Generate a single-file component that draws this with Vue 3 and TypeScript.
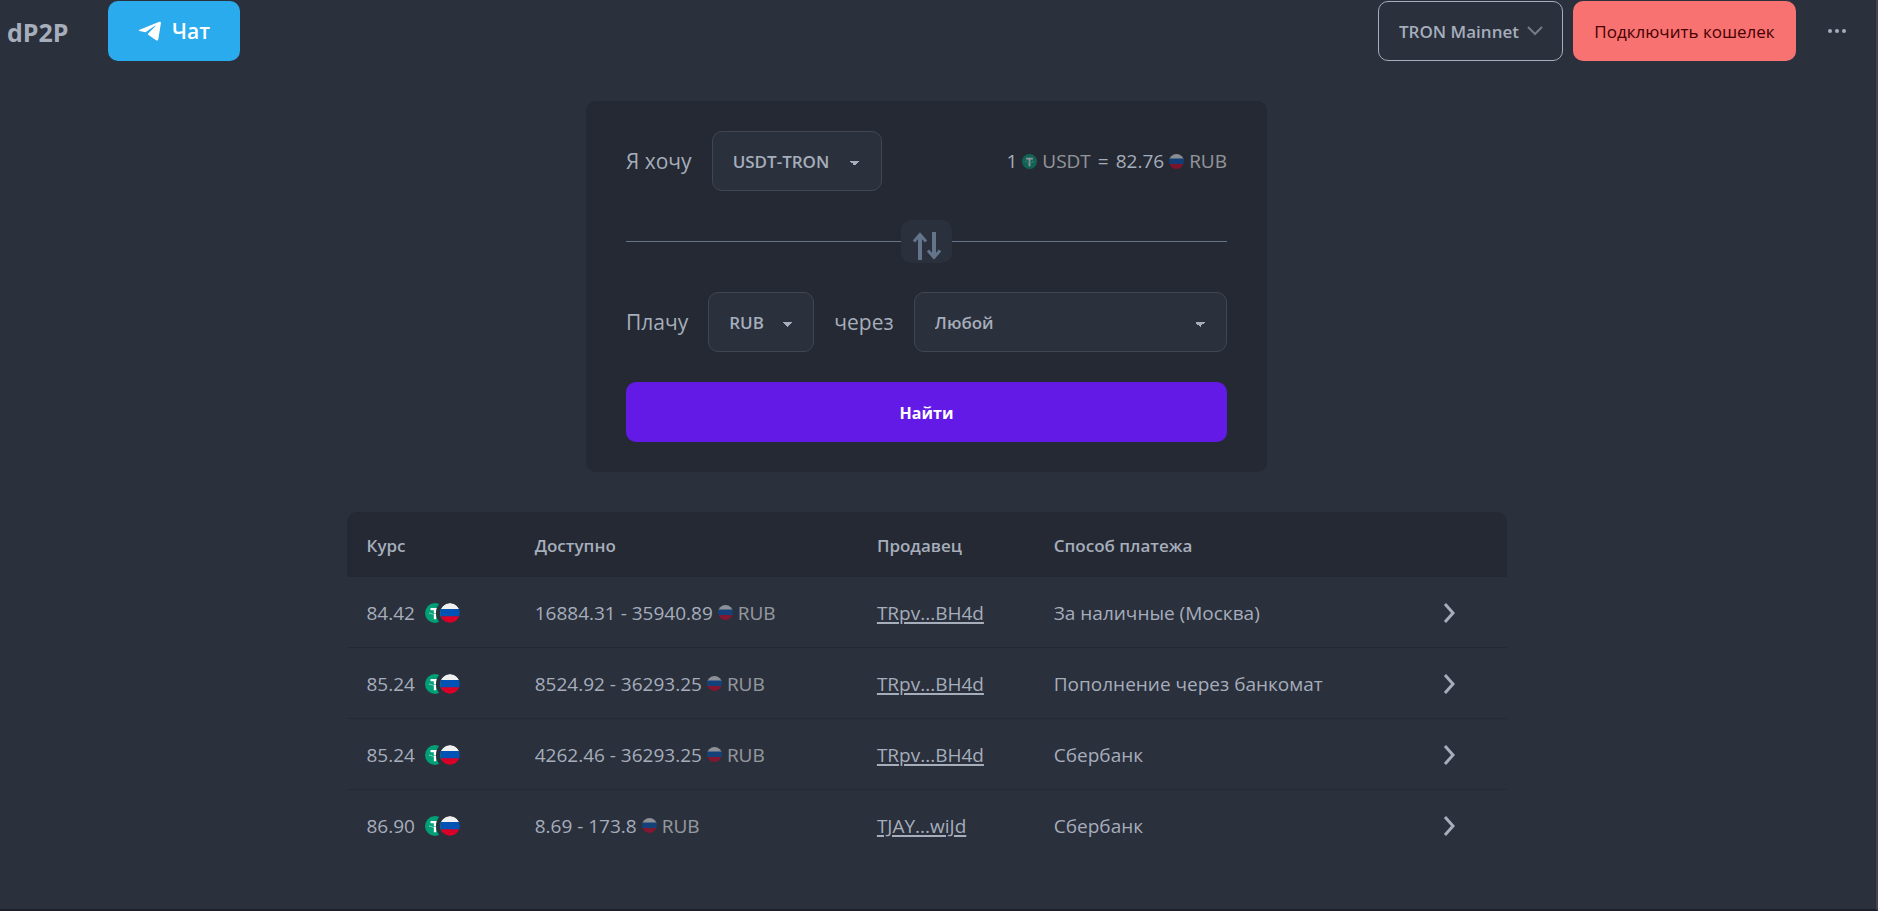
<script setup lang="ts">
import { ref } from 'vue'

interface Offer {
  rate: string
  available: string
  seller: string
  method: string
}

const network = ref('TRON Mainnet')
const asset = ref('USDT-TRON')
const fiat = ref('RUB')
const payment = ref('Любой')

const offers: Offer[] = [
  { rate: '84.42', available: '16884.31 - 35940.89', seller: 'TRpv...BH4d', method: 'За наличные (Москва)' },
  { rate: '85.24', available: '8524.92 - 36293.25', seller: 'TRpv...BH4d', method: 'Пополнение через банкомат' },
  { rate: '85.24', available: '4262.46 - 36293.25', seller: 'TRpv...BH4d', method: 'Сбербанк' },
  { rate: '86.90', available: '8.69 - 173.8', seller: 'TJAY...wiJd', method: 'Сбербанк' },
]
</script>

<template>
  <svg class="defs" aria-hidden="true">
    <symbol id="coin-usdt" viewBox="0 0 32 32">
      <circle cx="16" cy="16" r="16" fill="#009f76" />
      <path
        fill="#fff"
        d="M17.9 17.4c-.1 0-.7.1-1.9.1-1 0-1.7 0-1.9-.1-3.8-.2-6.600-.8-6.600-1.700s2.800-1.500 6.600-1.700v2.600c.3 0 1 .1 1.900.1 1.100 0 1.700 0 1.900-.1V14c3.800.2 6.600.8 6.600 1.700s-2.800 1.500-6.600 1.700m0-3.500v-2.300h5.300V8H8.800v3.600h5.300v2.300c-4.300.2-7.500 1-7.500 2.100s3.200 1.900 7.500 2.100V26h3.800v-7.900c4.300-.2 7.500-1 7.500-2.100s-3.200-1.900-7.500-2.100"
      />
    </symbol>
    <symbol id="flag-ru" viewBox="0 0 30 30">
      <clipPath id="flag-round"><circle cx="15" cy="15" r="15" /></clipPath>
      <g clip-path="url(#flag-round)">
        <path fill="#f0f0f0" d="M0 0h30v10H0z" />
        <path fill="#0052b4" d="M0 9h30v12H0z" />
        <path fill="#d80027" d="M0 20h30v10H0z" />
      </g>
    </symbol>
  </svg>

  <div class="page">
    <header class="topbar">
      <a class="brand" href="#">dP2P</a>
      <a class="chat" href="#">
        <svg width="24" height="20" viewBox="0 0 24 20" aria-hidden="true">
          <path
            fill="#fff"
            d="M1.600 8.700 21.300.8c1-.4 1.800.2 1.600 1.500l-2.600 16c-.2 1.300-1.200 1.600-2.200.9l-7.900-5.400c-.5-.4-.5-.9 0-1.400l7.300-7.300c.3-.4-.1-.6-.6-.3l-9 6.100c-.5.3-1 .4-1.600.2L1.600 10C.5 9.700.5 9.200 1.600 8.700z"
          />
        </svg>
        <span>Чат</span>
      </a>
      <div class="actions">
        <div class="network">
          <select v-model="network" aria-label="Сеть">
            <option>TRON Mainnet</option>
          </select>
          <svg width="16" height="10" viewBox="0 0 16 10" aria-hidden="true">
            <path fill="none" stroke="#757b88" stroke-width="2" d="m1 1 7 7 7-7" />
          </svg>
        </div>
        <button class="connect" type="button">Подключить кошелек</button>
        <button class="more" type="button" aria-label="Меню">
          <svg width="20" height="6" viewBox="0 0 20 6" aria-hidden="true">
            <g fill="#a6adbb">
              <circle cx="3" cy="3" r="2" />
              <circle cx="10" cy="3" r="2" />
              <circle cx="17" cy="3" r="2" />
            </g>
          </svg>
        </button>
      </div>
    </header>

    <main class="content">
      <form class="card" @submit.prevent>
        <div class="row">
          <label for="asset">Я хочу</label>
          <select id="asset" v-model="asset" class="field asset">
            <option>USDT-TRON</option>
          </select>
          <p class="quote">
            <span>1</span>
            <span class="unit"><svg><use href="#coin-usdt" /></svg>USDT</span>
            <span class="equals">=</span>
            <span>82.76</span>
            <span class="unit"><svg><use href="#flag-ru" /></svg>RUB</span>
          </p>
        </div>

        <div class="divider">
          <button class="swap" type="button" aria-label="Поменять местами">
            <svg width="28" height="28" viewBox="0 0 28 28" aria-hidden="true">
              <g fill="none" stroke="#64748b">
                <path stroke-width="4" d="M7 28V3M21 0v25" />
                <path stroke-width="3" d="M1 9.500 7 2.500l6 7M15 18.500l6 7 6-7" />
              </g>
            </svg>
          </button>
        </div>

        <div class="row">
          <label for="fiat">Плачу</label>
          <select id="fiat" v-model="fiat" class="field fiat">
            <option>RUB</option>
          </select>
          <label for="payment">через</label>
          <select id="payment" v-model="payment" class="field payment">
            <option>Любой</option>
          </select>
        </div>

        <button class="find" type="submit">Найти</button>
      </form>

      <table class="offers">
        <colgroup>
          <col class="c-rate" />
          <col class="c-available" />
          <col class="c-seller" />
          <col />
          <col class="c-open" />
        </colgroup>
        <thead>
          <tr>
            <th scope="col">Курс</th>
            <th scope="col">Доступно</th>
            <th scope="col">Продавец</th>
            <th scope="col">Способ платежа</th>
            <th></th>
          </tr>
        </thead>
        <tbody>
          <tr v-for="(offer, index) in offers" :key="index">
            <td>
              <div class="rate">
                <span>{{ offer.rate }}</span>
                <span class="pair">
                  <svg><use href="#coin-usdt" /></svg>
                  <svg class="front"><use href="#flag-ru" /></svg>
                </span>
              </div>
            </td>
            <td>
              <div class="amount">
                <span>{{ offer.available }}</span>
                <span class="unit"><svg><use href="#flag-ru" /></svg>RUB</span>
              </div>
            </td>
            <td><a href="#">{{ offer.seller }}</a></td>
            <td>{{ offer.method }}</td>
            <td>
              <button class="open" type="button" aria-label="Открыть предложение">
                <svg width="12" height="20" viewBox="0 0 12 20" aria-hidden="true">
                  <path fill="none" stroke="#a6adbb" stroke-width="3" d="m2 1 8 9-8 9" />
                </svg>
              </button>
            </td>
          </tr>
        </tbody>
      </table>
    </main>
  </div>
</template>

<style>
body {
  margin: 0;
  background: #2a303c;
}
</style>

<style scoped>
* {
  box-sizing: border-box;
}

.defs {
  position: absolute;
  width: 0;
  height: 0;
}

.page {
  min-height: 100vh;
  padding-right: 23px;
  border-right: 2px solid #45444a;
  border-bottom: 2px solid #1d202c;
  background: #2a303c;
  color: #a6adbb;
  font-family: 'Open Sans', 'Noto Sans', sans-serif;
  font-size: 19px;
  line-height: 28px;
}

svg {
  display: block;
  flex: none;
}

select,
button {
  margin: 0;
  font: inherit;
  color: inherit;
  cursor: pointer;
}

button {
  display: flex;
  align-items: center;
  justify-content: center;
  padding: 0;
  border: 0;
  background: none;
}

select {
  height: 60px;
  padding: 2px 20px 0;
  appearance: none;
  border: 1px solid #414651;
  border-radius: 10px;
  background-color: #2a303c;
  font-size: 17px;
  font-weight: 600;
}

.topbar {
  display: flex;
  align-items: center;
  padding-top: 1px;
}

.brand {
  width: 108px;
  padding: 2px 0 0 7px;
  color: inherit;
  font-size: 25px;
  font-weight: 700;
  text-decoration: none;
}

.chat {
  display: flex;
  align-items: center;
  justify-content: center;
  gap: 10px;
  width: 132px;
  height: 60px;
  border-radius: 10px;
  background: #2aabee;
  color: #fff;
  font-size: 21px;
  font-weight: 600;
  text-decoration: none;
}

.actions {
  display: flex;
  align-items: center;
  gap: 10px;
  margin-left: auto;
}

.network {
  position: relative;
}

.network select {
  width: 185px;
  border-color: #a6adbb;
}

.network svg {
  position: absolute;
  top: 25px;
  right: 20px;
  pointer-events: none;
}

.connect {
  width: 223px;
  height: 60px;
  padding-top: 2px;
  border-radius: 10px;
  background: #f87272;
  color: #470000;
  font-size: 17px;
}

.more {
  width: 62px;
  height: 60px;
  margin-right: -15px;
}

.content {
  display: flex;
  flex-direction: column;
  align-items: center;
  gap: 40px;
  padding-top: 40px;
}

.card {
  width: 100%;
  max-width: 681px;
  padding: 30px 40px;
  border-radius: 10px;
  background: #242933;
}

.row {
  display: flex;
  align-items: center;
  gap: 20px;
}

.row label {
  font-size: 21px;
}

.field {
  background-image:
    linear-gradient(45deg, transparent 50%, currentColor 50%),
    linear-gradient(135deg, currentColor 50%, transparent 50%);
  background-position:
    calc(100% - 26px) 29px,
    calc(100% - 21px) 29px;
  background-size: 5px 5px;
  background-repeat: no-repeat;
}

.asset {
  width: 170px;
}

.fiat {
  width: 106px;
}

.payment {
  flex: 1;
}

.quote {
  display: flex;
  align-items: center;
  gap: 5px;
  margin: 0 0 0 auto;
}

.equals {
  margin: 0 2px;
}

.unit {
  display: inline-flex;
  align-items: center;
  gap: 5px;
  color: #fff;
  opacity: 0.5;
}

.unit svg {
  width: 15px;
  height: 15px;
}

.divider {
  display: flex;
  align-items: center;
  height: 43px;
  margin: 29px 0;
}

.divider::before,
.divider::after {
  content: '';
  flex: 1;
  height: 1px;
  background: #64748b;
}

.swap {
  width: 51px;
  height: 43px;
  padding-top: 8px;
  border-radius: 10px;
  background: #2a303c;
}

.find {
  width: 100%;
  height: 60px;
  margin-top: 30px;
  padding-top: 2px;
  border-radius: 10px;
  background: #641ae6;
  color: #fff;
  font-size: 16px;
  font-weight: 700;
}

.offers {
  width: 100%;
  max-width: 1160px;
  border-collapse: separate;
  border-spacing: 0;
  table-layout: fixed;
  text-align: left;
}

.c-rate {
  width: 14.5%;
}

.c-available {
  width: 29.5%;
}

.c-seller {
  width: 15.25%;
}

.c-open {
  width: 84px;
}

th {
  height: 65px;
  padding: 2px 20px 0;
  background: #242933;
  font-size: 17px;
  font-weight: 600;
}

th:first-child {
  border-top-left-radius: 10px;
}

th:last-child {
  border-top-right-radius: 10px;
}

td {
  height: 71px;
  padding: 1px 20px 0;
  border-bottom: 1px solid #242933;
}

tr:last-child td {
  border-bottom-color: transparent;
}

td a {
  color: inherit;
  text-decoration-thickness: 2px;
  text-underline-offset: 2px;
}

.rate {
  display: flex;
  align-items: center;
  gap: 10px;
}

.pair {
  display: flex;
}

.pair svg {
  width: 20px;
  height: 20px;
}

.pair .front {
  margin-left: -5px;
  border-radius: 50%;
  box-shadow: 0 0 0 4px #2a303c;
}

.amount {
  display: flex;
  align-items: center;
  gap: 5px;
}
</style>
